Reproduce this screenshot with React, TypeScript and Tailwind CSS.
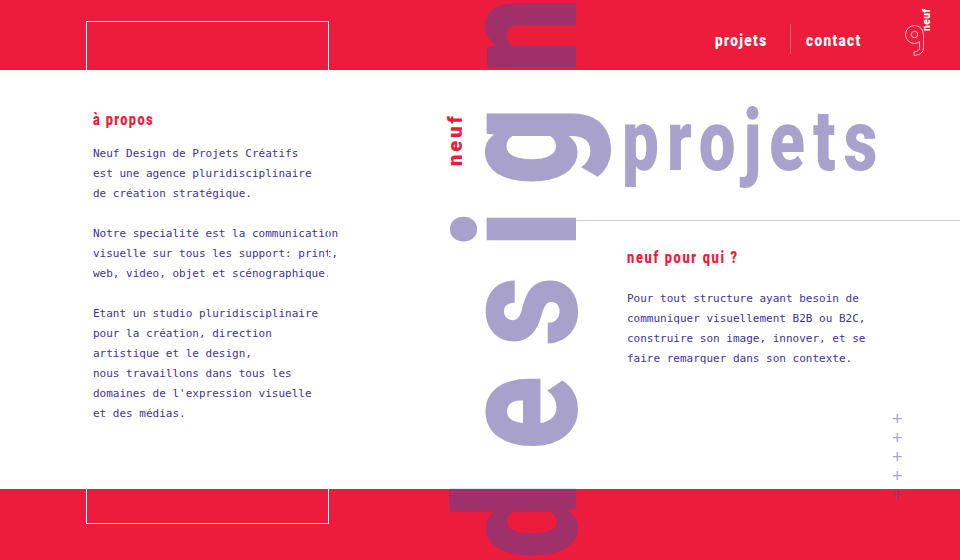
import React from 'react';

const display = "font-['Roboto',sans-serif] font-black origin-left whitespace-nowrap";
const heading = `block w-fit ${display}`;
const body = "font-['DejaVu_Sans_Mono',monospace] text-[11px] leading-[20px] text-[#41329b]";

function NineLogo() {
  return (
    <svg width="20" height="32" viewBox="0 0 20 32" fill="none" stroke="#ffffff" strokeOpacity="0.7" strokeWidth="1" className="ml-[44px] mt-[12px] shrink-0">
      <path d="M9.5 .5 a9 9 0 0 0 -9 9 a9 9 0 0 0 9 9 q3 0 5 -2 v6 q0 4 -5.5 4.5 v3.5 q9.5 -.5 9.5 -8 V9.5 a9 9 0 0 0 -9 -9 Z" />
      <circle cx="9.5" cy="9.5" r="3.2" />
    </svg>
  );
}

export default function App() {
  return (
    <div className="relative w-full h-[560px] overflow-hidden bg-white flex flex-col">
      {/* top bar */}
      <header className="h-[70px] bg-[#ed1c3c] flex items-center justify-end pr-[35px] shrink-0">
        <nav className="flex items-center text-white text-[16px] leading-[30px] mt-[8px]">
          <a className={`w-[75px] tracking-[1.6px] scale-x-[0.85] mt-[4px] ${display}`}>projets</a>
          <span className="w-px h-[30px] bg-white/30" />
          <a className={`ml-[15px] w-[55px] tracking-[1.6px] scale-x-[0.85] mt-[4px] ${display}`}>contact</a>
        </nav>
        <NineLogo />
      </header>

      <main className="h-[419px] flex shrink-0">
        {/* left column */}
        <section className="w-[622px] pl-[93px] pt-[40px] shrink-0">
          <h2 className={`text-[#ed1c3c] text-[16px] leading-[20px] tracking-[1.7px] scale-x-[0.8] ${heading}`}>à propos</h2>
          <div className={`mt-[14px] ${body}`}>
            <p>Neuf Design de Projets Créatifs<br />est une agence pluridisciplinaire<br />de création stratégique.</p>
            <p className="mt-[20px]">Notre specialité est la communication<br />visuelle sur tous les support: print,<br />web, video, objet et scénographique.</p>
            <p className="mt-[20px]">Etant un studio pluridisciplinaire<br />pour la création, direction<br />artistique et le design,<br />nous travaillons dans tous les<br />domaines de l'expression visuelle<br />et des médias.</p>
          </div>
        </section>

        {/* right column */}
        <section className="flex-1 min-w-0">
          <div className="h-[151px] border-b border-[#cfcbe0] -ml-[46px] pl-[46px] pt-[21px]">
            <h1 className={`text-[#a9a2cc] text-[85px] leading-[100px] tracking-[10.5px] scale-x-[0.77] ${heading}`}>projets</h1>
          </div>
          <div className="pl-[5px] pt-[27px]">
            <h2 className={`text-[#ed1c3c] text-[16px] leading-[20px] tracking-[2.1px] scale-x-[0.8] ${heading}`}>neuf pour qui ?</h2>
            <p className={`mt-[21px] ${body}`}>Pour tout structure ayant besoin de<br />communiquer visuellement B2B ou B2C,<br />construire son image, innover, et se<br />faire remarquer dans son contexte.</p>
          </div>
        </section>
      </main>

      <footer className="flex-1 bg-[#ed1c3c]" />

      {/* white outline frame running across the page */}
      <div className="absolute left-[86px] top-[21px] w-[243px] h-[503px] border border-white pointer-events-none" />

      {/* vertical word */}
      <span className="absolute left-[435px] top-[559px] origin-top-left -rotate-90 scale-x-[0.81] font-['Roboto',sans-serif] font-black text-[168px] leading-none text-[#534599] opacity-50 whitespace-nowrap">
        <span className="tracking-[40px]">d</span>
        <span className="tracking-[37px]">e</span>
        <span className="tracking-[35px]">s</span>
        <span className="tracking-[31px]">i</span>
        <span className="tracking-[41px]">g</span>
        <span>n</span>
      </span>

      {/* small vertical label */}
      <span className="absolute left-[445px] top-[166px] origin-top-left -rotate-90 font-['Roboto',sans-serif] font-black text-[#ed1c3c] text-[20px] leading-[20px] tracking-[3px] whitespace-nowrap">neuf</span>
      <span className="absolute left-[922px] top-[31px] origin-top-left -rotate-90 font-['Roboto',sans-serif] font-black text-white text-[10px] leading-[10px] tracking-[0.6px] whitespace-nowrap">neuf</span>

      {/* pager */}
      <div className="absolute left-[892px] top-[410px] flex flex-col text-[#534599]/50 text-[18px] leading-[19px] font-['Liberation_Sans',sans-serif]">
        <span>+</span><span>+</span><span>+</span><span>+</span><span>+</span>
      </div>
    </div>
  );
}
